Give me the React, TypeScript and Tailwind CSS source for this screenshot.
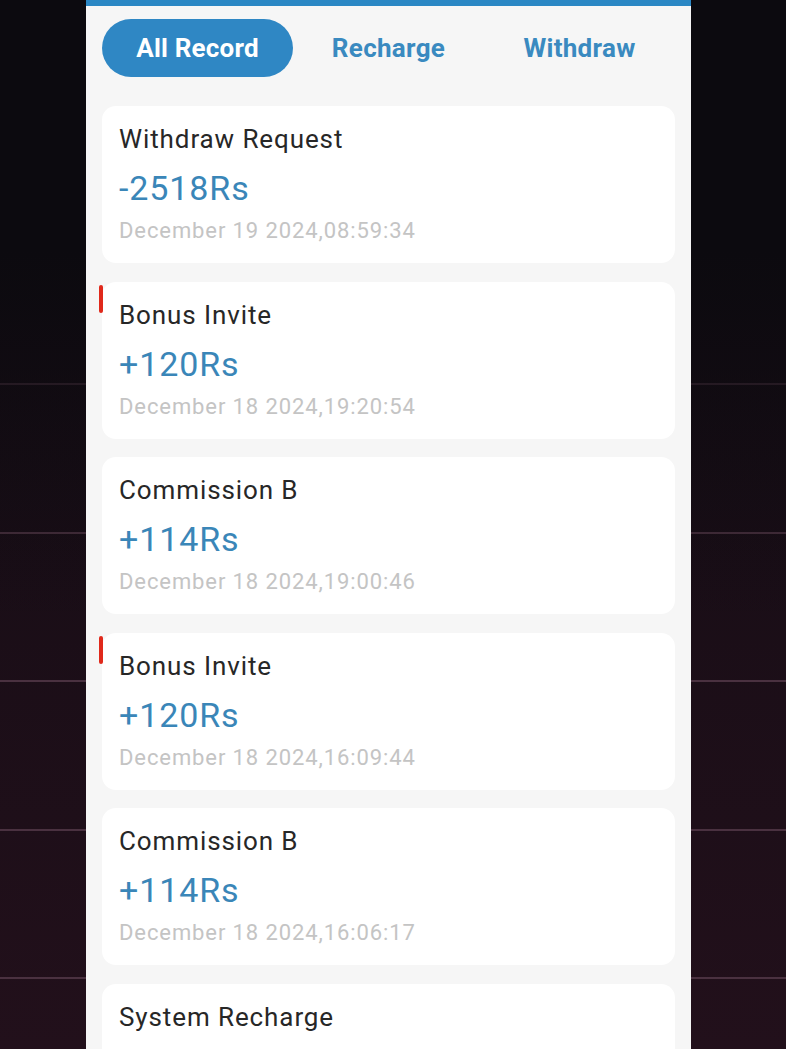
import React from "react";

type Rec = { title: string; amount?: string; date?: string; mark?: boolean };

const records: Rec[] = [
  { title: "Withdraw Request", amount: "-2518Rs", date: "December 19 2024,08:59:34" },
  { title: "Bonus Invite", amount: "+120Rs", date: "December 18 2024,19:20:54", mark: true },
  { title: "Commission B", amount: "+114Rs", date: "December 18 2024,19:00:46" },
  { title: "Bonus Invite", amount: "+120Rs", date: "December 18 2024,16:09:44", mark: true },
  { title: "Commission B", amount: "+114Rs", date: "December 18 2024,16:06:17" },
  { title: "System Recharge" },
];

const sideBg =
  "bg-[linear-gradient(to_bottom,#0c0a0f_0px,#0c0a0f_250px,rgba(12,10,15,0.55)_400px,rgba(12,10,15,0)_620px),repeating-linear-gradient(to_bottom,transparent_0px,transparent_86px,#4a3140_86px,#4a3140_88px,transparent_88px,transparent_148.5px),linear-gradient(to_bottom,#100b12,#22101b)]";

function Side({ className }: { className: string }) {
  return <div className={`${className} h-full ${sideBg}`} />;
}

function Card({ r }: { r: Rec }) {
  return (
    <div className="relative h-[157px] shrink-0 rounded-[14px] bg-white pl-[17px] pt-[18px]">
      {r.mark && (
        <div className="absolute left-[-3px] top-[3px] h-[28px] w-[4px] rounded-sm bg-[#e0291b]" />
      )}
      <div className="text-[26px] leading-[30px] tracking-[0.9px] text-[#272727]">{r.title}</div>
      {r.amount && (
        <div className="mt-[14px] text-[34px] leading-[40px] tracking-[0.9px] text-[#3a86b8]">{r.amount}</div>
      )}
      {r.date && (
        <div className="mt-[10px] text-[22px] leading-[26px] tracking-[0.9px] text-[#c4c4c4]">{r.date}</div>
      )}
    </div>
  );
}

export default function App() {
  return (
    <div
      className="flex h-[1049px] w-full overflow-hidden bg-[#0c0a0f]"
      style={{ fontFamily: "Roboto, 'Noto Sans', sans-serif" }}
    >
      <Side className="w-[86px] shrink-0" />
      <div className="flex h-full w-[605px] shrink-0 flex-col bg-[#f6f6f6]">
        <div className="h-[6px] shrink-0 bg-[#2b87c4]" />
        <div className="flex shrink-0 px-[16px] pt-[13px]">
          <div className="flex h-[58px] w-[191px] items-center justify-center rounded-full bg-[#2f87c4] text-[26px] font-bold tracking-[0.2px] text-white">
            All Record
          </div>
          <div className="flex h-[58px] w-[191px] items-center justify-center text-[26px] font-bold tracking-[0.3px] text-[#3a8ac0]">
            Recharge
          </div>
          <div className="flex h-[58px] w-[191px] items-center justify-center text-[26px] font-bold tracking-[0.3px] text-[#3a8ac0]">
            Withdraw
          </div>
        </div>
        <div className="mt-[29px] flex flex-col gap-[18.5px] px-[16px]">
          {records.map((r, i) => (
            <Card key={i} r={r} />
          ))}
        </div>
      </div>
      <Side className="flex-1" />
    </div>
  );
}
